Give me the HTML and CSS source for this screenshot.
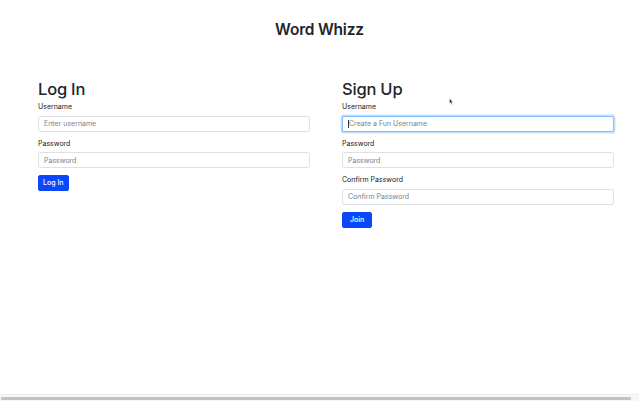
FILE: index.html
```html
<!DOCTYPE html>
<html lang="en">
<head>
<meta charset="utf-8">
<title>Word Whizz</title>
<link rel="stylesheet" href="styles.css">
</head>
<body>
<div class="page">
  <main class="main">
    <h1 class="title">Word Whizz</h1>
    <div class="columns">
      <form class="panel">
        <h2 class="panel-title">Log In</h2>
        <div class="group">
          <label class="label">Username</label>
          <input class="input" type="text" placeholder="Enter username">
        </div>
        <div class="group">
          <label class="label">Password</label>
          <input class="input" type="password" placeholder="Password">
        </div>
        <button class="btn" type="button">Log In</button>
      </form>
      <form class="panel">
        <h2 class="panel-title">Sign Up</h2>
        <div class="group">
          <label class="label">Username</label>
          <div class="input input-focus"><span class="caret"></span><span class="ph">Create a Fun Username</span></div>
        </div>
        <div class="group">
          <label class="label">Password</label>
          <input class="input" type="password" placeholder="Password">
        </div>
        <div class="group">
          <label class="label">Confirm Password</label>
          <input class="input" type="password" placeholder="Confirm Password">
        </div>
        <button class="btn" type="button">Join</button>
        <svg class="cursor" width="4" height="7" viewBox="0 0 4 7"><path d="M0.5 0.5 L0.5 5.5 L1.6 4.4 L2.5 6.5 L3.2 6.2 L2.4 4.2 L3.8 4.2 Z" fill="#222" stroke="#fff" stroke-width="0.4"/></svg>
      </form>
    </div>
  </main>
  <div class="hscroll"><div class="hscroll-thumb"></div></div>
</div>
</body>
</html>
```

FILE: styles.css
```css
* { box-sizing: border-box; }
html, body { margin: 0; padding: 0; background: #fff; }
body {
  font-family: Inter, "Liberation Sans", Arial, sans-serif;
  color: #212529;
}
.page {
  height: 100vh;
  display: flex;
  flex-direction: column;
}
.main { flex: 1; }
.title {
  margin: 19.5px 0 0;
  font-size: 15.5px;
  line-height: 20px;
  font-weight: 600;
  text-align: center;
  letter-spacing: -0.2px;
  color: #212529;
}
.columns {
  display: grid;
  grid-template-columns: 272px 272px;
  column-gap: 32px;
  padding: 0 0 0 38px;
  margin-top: 39px;
}
.panel {
  position: relative;
  margin: 0;
}
.panel-title {
  margin: 0 0 3.7px;
  font-size: 16.5px;
  line-height: 20px;
  font-weight: 500;
  letter-spacing: -0.2px;
  color: #212529;
}
.group { margin-bottom: 7px; }
.label {
  display: block;
  font-size: 7px;
  line-height: 10px;
  font-weight: 400;
  margin-bottom: 3.5px;
  color: #16191c;
}
.input {
  display: block;
  width: 100%;
  height: 16px;
  margin: 0;
  padding: 0 5px;
  font-family: inherit;
  font-size: 7px;
  line-height: 14px;
  color: #495057;
  background: #fff;
  border: 1px solid #dfe2e5;
  border-radius: 2px;
  outline: none;
}
.input::placeholder { color: #7a828a; }
.input-focus {
  border-color: #80bdff;
  box-shadow: 0 0 0 1.5px rgba(0, 123, 255, 0.22);
  display: flex;
  align-items: center;
}
.caret {
  display: inline-block;
  width: 1px;
  height: 8px;
  background: #333;
}
.ph { color: #7a828a; }
.btn {
  display: block;
  min-width: 30px;
  height: 16px;
  padding: 0 4px;
  font-family: inherit;
  font-size: 7px;
  font-weight: 500;
  line-height: 14px;
  text-align: center;
  color: #fff;
  background: #0a46fa;
  border: 1px solid #0a46fa;
  border-radius: 2px;
}
.cursor {
  position: absolute;
  left: 107px;
  top: 19px;
}
.hscroll {
  height: 7px;
  background: #f6f6f6;
  border-top: 1px solid #ececec;
  padding: 1.5px 8px 1.5px 1px;
}
.hscroll-thumb {
  height: 3px;
  background: #c2c2c2;
  border-radius: 2px;
}
```
